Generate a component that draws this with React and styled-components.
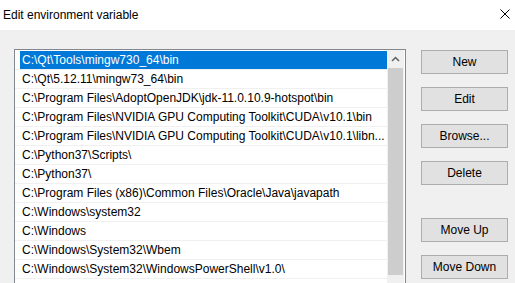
import React from 'react';
import styled, { createGlobalStyle } from 'styled-components';

const GlobalStyle = createGlobalStyle`
  html, body {
    margin: 0;
    padding: 0;
    overflow: hidden;
    background: #f0f0f0;
    font-family: "Liberation Sans", Arial, sans-serif;
    font-size: 12px;
    color: #000;
  }
`;

const Window = styled.div`
  display: flex;
  flex-direction: column;
  width: 515px;
  height: 283px;
  overflow: hidden;
  background: #f0f0f0;
`;

const TitleBar = styled.header`
  display: flex;
  align-items: center;
  justify-content: space-between;
  height: 30px;
  flex: 0 0 30px;
  padding: 0 5px 0 3px;
  background: #fff;
  box-sizing: border-box;
`;

const Title = styled.span`
  font-size: 12px;
  line-height: 16px;
`;

const CloseIcon = styled.svg`
  display: block;
  width: 10px;
  height: 10px;
  margin-top: -2px;
`;

const Body = styled.main`
  display: flex;
  flex-direction: row;
  align-items: flex-start;
  gap: 15px;
  padding: 19px 0 0 14px;
`;

const ListBox = styled.div`
  display: flex;
  width: 392px;
  height: 260px;
  box-sizing: border-box;
  border: 1px solid #828790;
  background: #fff;
`;

const Rows = styled.ul`
  flex: 1;
  margin: 0;
  padding: 1px 0 0;
  list-style: none;
`;

const Row = styled.li`
  display: flex;
  height: 18px;
  border-bottom: 1px solid #f0f0f0;
`;

const Cell = styled.span`
  flex: 1;
  margin-left: 5px;
  padding-left: 2px;
  line-height: 18px;
  white-space: nowrap;
  overflow: hidden;
  background: ${p => (p.$selected ? '#0078d7' : 'transparent')};
  color: ${p => (p.$selected ? '#fff' : '#000')};
`;

const ScrollBar = styled.div`
  display: flex;
  flex-direction: column;
  width: 17px;
  margin-right: 1px;
  background: #f0f0f0;
`;

const ArrowButton = styled.div`
  display: flex;
  align-items: center;
  justify-content: center;
  height: 18px;
`;

const Thumb = styled.div`
  height: 207px;
  margin: 0 1px;
  background: #cdcdcd;
`;

const ButtonColumn = styled.div`
  display: flex;
  flex-direction: column;
  gap: 13px;
  padding-top: 1px;
`;

const Button = styled.button`
  width: 87px;
  height: 24px;
  margin-top: ${p => (p.$spaced ? '20px' : '0')};
  padding: 0;
  border: 1px solid #adadad;
  background: #e1e1e1;
  font-family: "Liberation Sans", Arial, sans-serif;
  font-size: 12px;
  color: #000;
  text-align: center;
`;

const paths = [
  'C:\\Qt\\Tools\\mingw730_64\\bin',
  'C:\\Qt\\5.12.11\\mingw73_64\\bin',
  'C:\\Program Files\\AdoptOpenJDK\\jdk-11.0.10.9-hotspot\\bin',
  'C:\\Program Files\\NVIDIA GPU Computing Toolkit\\CUDA\\v10.1\\bin',
  'C:\\Program Files\\NVIDIA GPU Computing Toolkit\\CUDA\\v10.1\\libn...',
  'C:\\Python37\\Scripts\\',
  'C:\\Python37\\',
  'C:\\Program Files (x86)\\Common Files\\Oracle\\Java\\javapath',
  'C:\\Windows\\system32',
  'C:\\Windows',
  'C:\\Windows\\System32\\Wbem',
  'C:\\Windows\\System32\\WindowsPowerShell\\v1.0\\',
  '',
];

const buttons = [
  { label: 'New' },
  { label: 'Edit' },
  { label: 'Browse...' },
  { label: 'Delete' },
  { label: 'Move Up', spaced: true },
  { label: 'Move Down' },
];

export default function App() {
  return (
    <>
      <GlobalStyle />
      <Window>
        <TitleBar>
          <Title>Edit environment variable</Title>
          <CloseIcon viewBox="0 0 10 10">
            <path d="M0.5 0.5 L9.5 9.5 M9.5 0.5 L0.5 9.5" stroke="#000" strokeWidth="1" fill="none" />
          </CloseIcon>
        </TitleBar>
        <Body>
          <ListBox>
            <Rows>
              {paths.map((p, i) => (
                <Row key={i}>
                  <Cell $selected={i === 0}>{p}</Cell>
                </Row>
              ))}
            </Rows>
            <ScrollBar>
              <ArrowButton>
                <svg width="9" height="6" viewBox="0 0 9 6">
                  <path d="M1 5 L4.5 1.5 L8 5" stroke="#606060" strokeWidth="1.5" fill="none" />
                </svg>
              </ArrowButton>
              <Thumb />
            </ScrollBar>
          </ListBox>
          <ButtonColumn>
            {buttons.map(b => (
              <Button key={b.label} $spaced={b.spaced}>{b.label}</Button>
            ))}
          </ButtonColumn>
        </Body>
      </Window>
    </>
  );
}
